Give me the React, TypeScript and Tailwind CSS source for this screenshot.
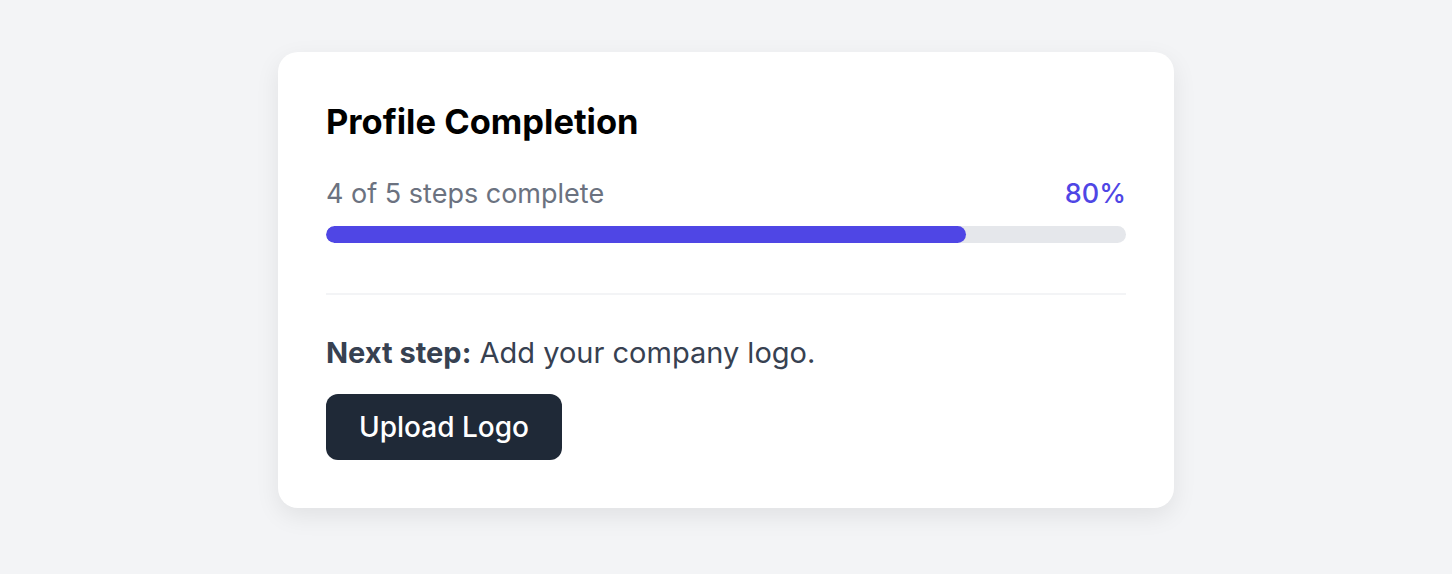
import React from "react";

export default function App() {
  const pct = 80;
  return (
    <div className="min-h-screen bg-[#f3f4f6] pt-[52px] flex justify-center" style={{ fontFamily: "Inter, 'Noto Sans', sans-serif" }}>
      <div className="w-[896px] h-[456px] bg-white rounded-[20px] shadow-[0_8px_24px_rgba(0,0,0,0.08)] px-12 pt-12 pb-12 flex flex-col">
        <h2 className="text-[34.5px] leading-[44px] font-bold text-black">Profile Completion</h2>
        <div className="mt-[34px] flex justify-between items-center text-[27px] leading-[32px]">
          <span className="text-[#6b7280]">4 of 5 steps complete</span>
          <span className="text-[#4f46e5] font-medium">{pct}%</span>
        </div>
        <div className="mt-[16px] h-[18px] w-full rounded-full bg-[#e5e7eb] overflow-hidden">
          <div className="h-full rounded-full bg-[#4f46e5]" style={{ width: `${pct}%` }} />
        </div>
        <div className="mt-[50px] border-t-2 border-[#f3f4f6]" />
        <p className="mt-[40px] text-[29px] leading-[36px] text-[#374151]">
          <span className="font-bold">Next step:</span> Add your company logo.
        </p>
        <div className="mt-[23px]">
          <button className="h-[66px] px-[33px] rounded-[12px] bg-[#1f2937] text-white text-[28px] font-medium">Upload Logo</button>
        </div>
      </div>
    </div>
  );
}
